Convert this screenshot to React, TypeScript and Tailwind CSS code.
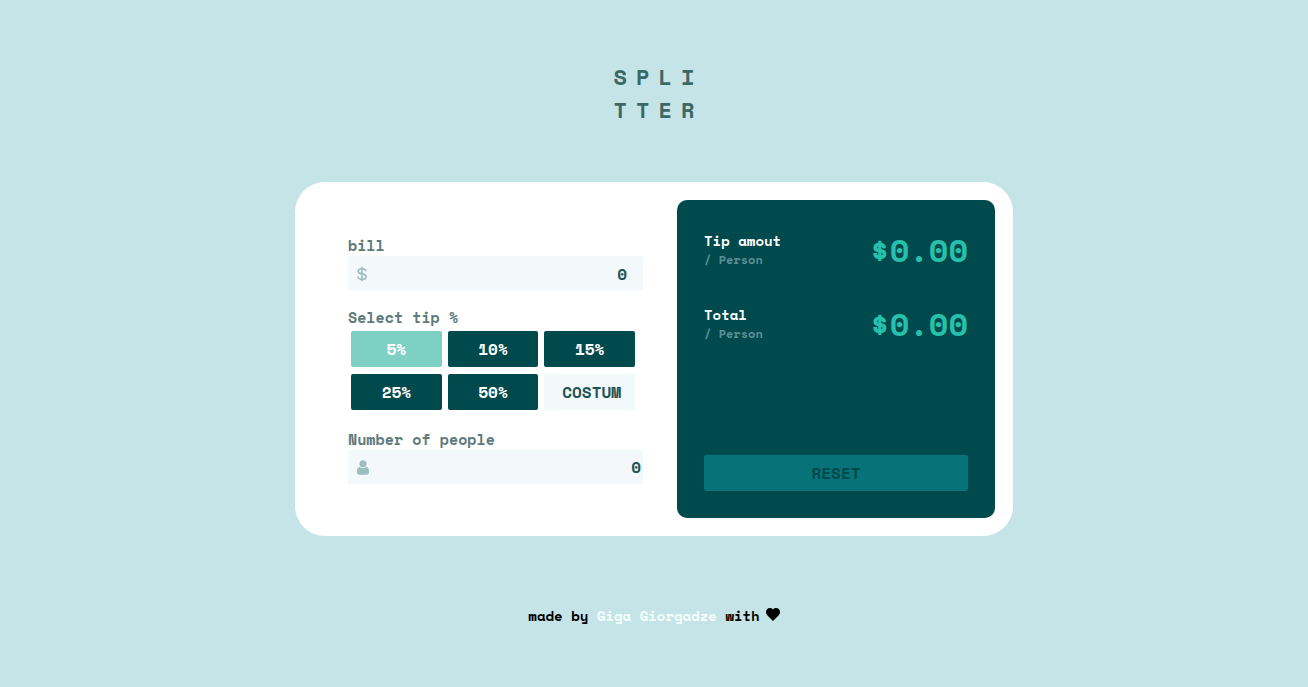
import { useState } from "react";

const presets = [5, 10, 15, 25, 50];

function DollarIcon() {
  return (
    <svg viewBox="0 0 10 16" className="h-4 w-2.5 shrink-0" fill="none" stroke="#9dbdbe" strokeWidth="1.600" aria-hidden="true">
      <path d="M8.800 5.300V5C8.800 3.600 7.200 2.700 5 2.700S1.100 3.700 1.100 5.300c0 1.700 1.500 2.200 3.900 2.600 2.500.4 4.100 1 4.100 2.800 0 1.700-1.700 2.700-4.100 2.700S.9 12.300.9 10.600v-.4M5 .8v14.400" />
    </svg>
  );
}

function PersonIcon() {
  return (
    <svg viewBox="0 0 12 15" className="h-[15px] w-3 shrink-0" fill="#9dbdbe" aria-hidden="true">
      <circle cx="6" cy="3.700" r="3.500" />
      <path d="M2.800 6.900C.8 7.200 0 8.700 0 11v1.300C0 13.900.9 14.800 2.400 14.800h7.200c1.500 0 2.400-.9 2.400-2.500V11c0-2.300-.8-3.800-2.800-4.100C8.400 7.600 7.300 8 6 8s-2.400-.4-3.200-1.100Z" />
    </svg>
  );
}

function HeartIcon() {
  return (
    <svg viewBox="0 0 14 13" className="mb-1 h-[13px] w-3.5" fill="#000" role="img" aria-label="love">
      <path d="M7 13 1.200 7.200C-.4 5.500-.4 2.700 1.200 1.100 2.800-.4 5.300-.3 7 1.500 8.700-.3 11.200-.4 12.800 1.100c1.600 1.600 1.600 4.400 0 6.100L7 13Z" />
    </svg>
  );
}

function ResultRow({ title, amount }: { title: string; amount: number }) {
  return (
    <div className="flex items-center justify-between">
      <div>
        <h2 className="text-[14px] leading-[19px] text-white">{title}</h2>
        <p className="text-[12px] leading-[19px] text-[#5f9092]">/ Person</p>
      </div>
      <output className="text-[32px] leading-[38px] text-[#26c0ab]">${amount.toFixed(2)}</output>
    </div>
  );
}

export default function App() {
  const [bill, setBill] = useState("");
  const [people, setPeople] = useState("");
  const [custom, setCustom] = useState("");
  const [tip, setTip] = useState(5);

  const count = Number(people) || 0;
  const total = Number(bill) || 0;
  const rate = custom === "" ? tip : Number(custom) || 0;
  const tipEach = count > 0 ? (total * rate) / 100 / count : 0;
  const totalEach = count > 0 ? total / count + tipEach : 0;

  const reset = () => {
    setBill("");
    setPeople("");
    setCustom("");
    setTip(5);
  };

  return (
    <div className="flex min-h-screen flex-col items-center bg-[#c5e4e7] px-4 pb-10 pt-[60px] font-['Space_Mono','Liberation_Mono',monospace] font-bold">
      <h1 className="pl-[9px] text-[22px] leading-[33px] tracking-[9px] text-[#3d6666]">
        SPLI
        <br />
        TTER
      </h1>

      <main className="mt-14 grid w-full max-w-[718px] gap-y-6 rounded-[30px] bg-white p-[18px] md:grid-cols-[364fr_318fr]">
        <form className="pb-[34px] pl-[35px] pr-[34px] pt-[34px]" onSubmit={(e) => e.preventDefault()}>
          <label htmlFor="bill" className="block text-[15px] leading-[22px] text-[#5e7a7d]">
            bill
          </label>
          <div className="flex h-[35px] items-center rounded-[2px] bg-[#f3f9fa] pl-[9px] pr-4">
            <DollarIcon />
            <input
              id="bill"
              inputMode="decimal"
              placeholder="0"
              value={bill}
              onChange={(e) => setBill(e.target.value)}
              className="w-full min-w-0 bg-transparent text-right text-[16px] text-[#00494d] outline-none placeholder:text-[#1f5356]"
            />
          </div>

          <fieldset className="mt-[15px]">
            <legend className="block text-[15px] leading-[22px] text-[#5e7a7d]">Select tip %</legend>
            <div className="mt-[3px] grid grid-cols-3 gap-x-1.5 gap-y-[7px] pl-[3px] pr-2">
              {presets.map((p) => (
                <button
                  key={p}
                  type="button"
                  aria-pressed={tip === p}
                  onClick={() => {
                    setTip(p);
                    setCustom("");
                  }}
                  className={
                    tip === p
                      ? "h-9 rounded-[2px] bg-[#7fd0c4] text-[16px] text-white"
                      : "h-9 rounded-[2px] bg-[#00494d] text-[16px] text-white"
                  }
                >
                  {p}%
                </button>
              ))}
              <input
                aria-label="Custom tip percentage"
                inputMode="decimal"
                placeholder="COSTUM"
                value={custom}
                onChange={(e) => setCustom(e.target.value)}
                className="h-9 w-full min-w-0 rounded-[2px] bg-[#f3f9fa] pl-1 text-center text-[16px] text-[#00494d] outline-none placeholder:text-[#1f5356]"
              />
            </div>
          </fieldset>

          <label htmlFor="people" className="mt-[18px] block text-[15px] leading-[22px] text-[#5e7a7d]">
            Number of people
          </label>
          <div className="flex h-[34px] items-center rounded-[2px] bg-[#f3f9fa] pl-[9px] pr-0.5">
            <PersonIcon />
            <input
              id="people"
              inputMode="numeric"
              placeholder="0"
              value={people}
              onChange={(e) => setPeople(e.target.value)}
              className="w-full min-w-0 bg-transparent text-right text-[16px] text-[#00494d] outline-none placeholder:text-[#1f5356]"
            />
          </div>
        </form>

        <section className="flex flex-col rounded-[10px] bg-[#00494d] px-[27px] pb-[27px] pt-[31px]">
          <div className="flex flex-col gap-9">
            <ResultRow title="Tip amout" amount={tipEach} />
            <ResultRow title="Total" amount={totalEach} />
          </div>
          <button
            type="button"
            onClick={reset}
            className="mt-auto h-9 w-full rounded-[2px] bg-[#077378] text-[16px] text-[#00494d]"
          >
            RESET
          </button>
        </section>
      </main>

      <footer className="mt-[70px] flex items-center gap-1.5 text-[14px] leading-5 text-black">
        <p>
          made by{" "}
          <a href="#author" className="text-[#f4fdfd]">
            Giga Giorgadze
          </a>{" "}
          with
        </p>
        <HeartIcon />
      </footer>
    </div>
  );
}
